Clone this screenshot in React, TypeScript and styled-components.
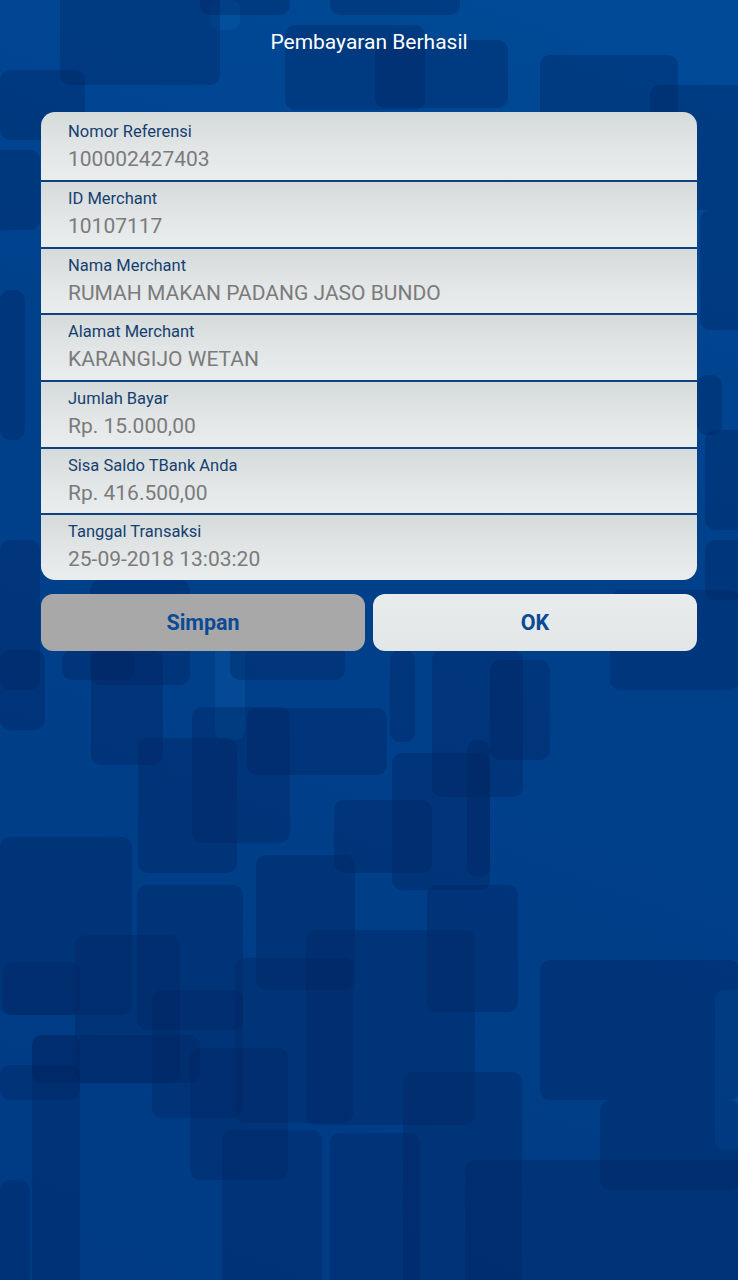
import React from 'react';
import styled, { createGlobalStyle } from 'styled-components';

const GlobalStyle = createGlobalStyle`
  html, body {
    margin: 0;
    padding: 0;
    background: #003e89;
  }
  * {
    box-sizing: border-box;
  }
`;

const Screen = styled.div`
  position: relative;
  width: 738px;
  height: 1280px;
  overflow: hidden;
  background: linear-gradient(200deg, #004b98 0%, #00418c 35%, #003b84 100%);
  font-family: Roboto, 'Noto Sans', sans-serif;
`;

const Pattern = styled.svg`
  position: absolute;
  inset: 0;
  z-index: 0;
`;

const Content = styled.div`
  position: relative;
  z-index: 1;
  display: flex;
  flex-direction: column;
  padding: 29px 41px 0;
`;

const Title = styled.h1`
  margin: 0 0 57px;
  font-size: 21px;
  line-height: 26px;
  font-weight: 400;
  color: #ffffff;
  text-align: center;
`;

const Card = styled.div`
  display: flex;
  flex-direction: column;
  border-radius: 14px;
  overflow: hidden;
`;

const Row = styled.div`
  height: 68px;
  padding: 9px 27px 0;
  background: linear-gradient(to bottom, #d5dadb 0%, #e3e7e8 60%, #eaeded 100%);
  & + & {
    border-top: 2px solid #123f7e;
    height: 66.67px;
    padding-top: 6px;
  }
`;

const Label = styled.div`
  font-size: 16.5px;
  line-height: 22px;
  color: #163f6f;
`;

const Value = styled.div`
  margin-top: 3px;
  font-size: 21px;
  line-height: 26px;
  color: #7b7b7b;
`;

const Actions = styled.div`
  display: grid;
  grid-template-columns: 1fr 1fr;
  gap: 8px;
  margin-top: 14px;
`;

const Button = styled.button<{ $muted?: boolean }>`
  height: 57px;
  border: none;
  border-radius: 12px;
  font-family: Roboto, 'Noto Sans', sans-serif;
  font-size: 21.5px;
  font-weight: 700;
  color: #0b4a94;
  background: ${({ $muted }) =>
    $muted ? '#a8a8a8' : 'linear-gradient(to bottom, #e9eced, #e2e6e7)'};
  cursor: pointer;
`;

const details = [
  { label: 'Nomor Referensi', value: '100002427403' },
  { label: 'ID Merchant', value: '10107117' },
  { label: 'Nama Merchant', value: 'RUMAH MAKAN PADANG JASO BUNDO' },
  { label: 'Alamat Merchant', value: 'KARANGIJO WETAN' },
  { label: 'Jumlah Bayar', value: 'Rp. 15.000,00' },
  { label: 'Sisa Saldo TBank Anda', value: 'Rp. 416.500,00' },
  { label: 'Tanggal Transaksi', value: '25-09-2018 13:03:20' },
];

// x, y, w, h of the dark squares in the wallpaper
const darkTiles: [number, number, number, number][] = [
  [60, -10, 160, 95], [200, -10, 90, 25], [330, -10, 130, 25], [285, 25, 140, 85],
  [375, 40, 133, 68], [540, 55, 138, 85], [650, 85, 100, 125], [0, 70, 85, 70],
  [-10, 150, 50, 80], [700, 210, 50, 120], [0, 290, 25, 150], [0, 540, 40, 150],
  [697, 375, 25, 60], [705, 430, 40, 100], [705, 540, 40, 60], [90, 580, 100, 105],
  [230, 600, 115, 80], [610, 590, 130, 100],
  [0, 650, 45, 80], [62, 650, 73, 30], [91, 650, 72, 115], [138, 738, 99, 135],
  [192, 707, 98, 136], [247, 708, 140, 67], [390, 650, 25, 92], [432, 650, 91, 147],
  [467, 740, 23, 137], [334, 800, 98, 73], [392, 753, 98, 137], [490, 660, 60, 100],
  [0, 837, 132, 178], [137, 885, 106, 145], [256, 855, 99, 135], [306, 930, 169, 195],
  [427, 885, 91, 127], [75, 935, 105, 148], [3, 962, 77, 53], [235, 958, 118, 165],
  [152, 990, 91, 128], [32, 1035, 168, 48], [190, 1048, 98, 132], [0, 1065, 80, 35],
  [32, 1035, 48, 260], [222, 1130, 100, 160], [330, 1133, 90, 160], [403, 1072, 119, 220],
  [465, 1160, 290, 130], [540, 960, 200, 140], [600, 1100, 140, 90], [0, 1180, 30, 110],
];

const lightTiles: [number, number, number, number][] = [
  [210, 0, 30, 30], [215, 640, 30, 100], [715, 990, 30, 160],
];

const App: React.FC = () => {
  return (
    <Screen>
      <GlobalStyle />
      <Pattern width="738" height="1280" viewBox="0 0 738 1280">
        {lightTiles.map(([x, y, w, h], i) => (
          <rect key={`l-${i}`} x={x} y={y} width={w} height={h} rx="9" fill="#0a66b8" opacity="0.25" />
        ))}
        {darkTiles.map(([x, y, w, h], i) => (
          <rect key={`d-${i}`} x={x} y={y} width={w} height={h} rx="10" fill="#00225e" opacity="0.34" />
        ))}
      </Pattern>
      <Content>
        <Title>Pembayaran Berhasil</Title>
        <Card>
          {details.map(({ label, value }) => (
            <Row key={label}>
              <Label>{label}</Label>
              <Value>{value}</Value>
            </Row>
          ))}
        </Card>
        <Actions>
          <Button $muted>Simpan</Button>
          <Button>OK</Button>
        </Actions>
      </Content>
    </Screen>
  );
};

export default App;
